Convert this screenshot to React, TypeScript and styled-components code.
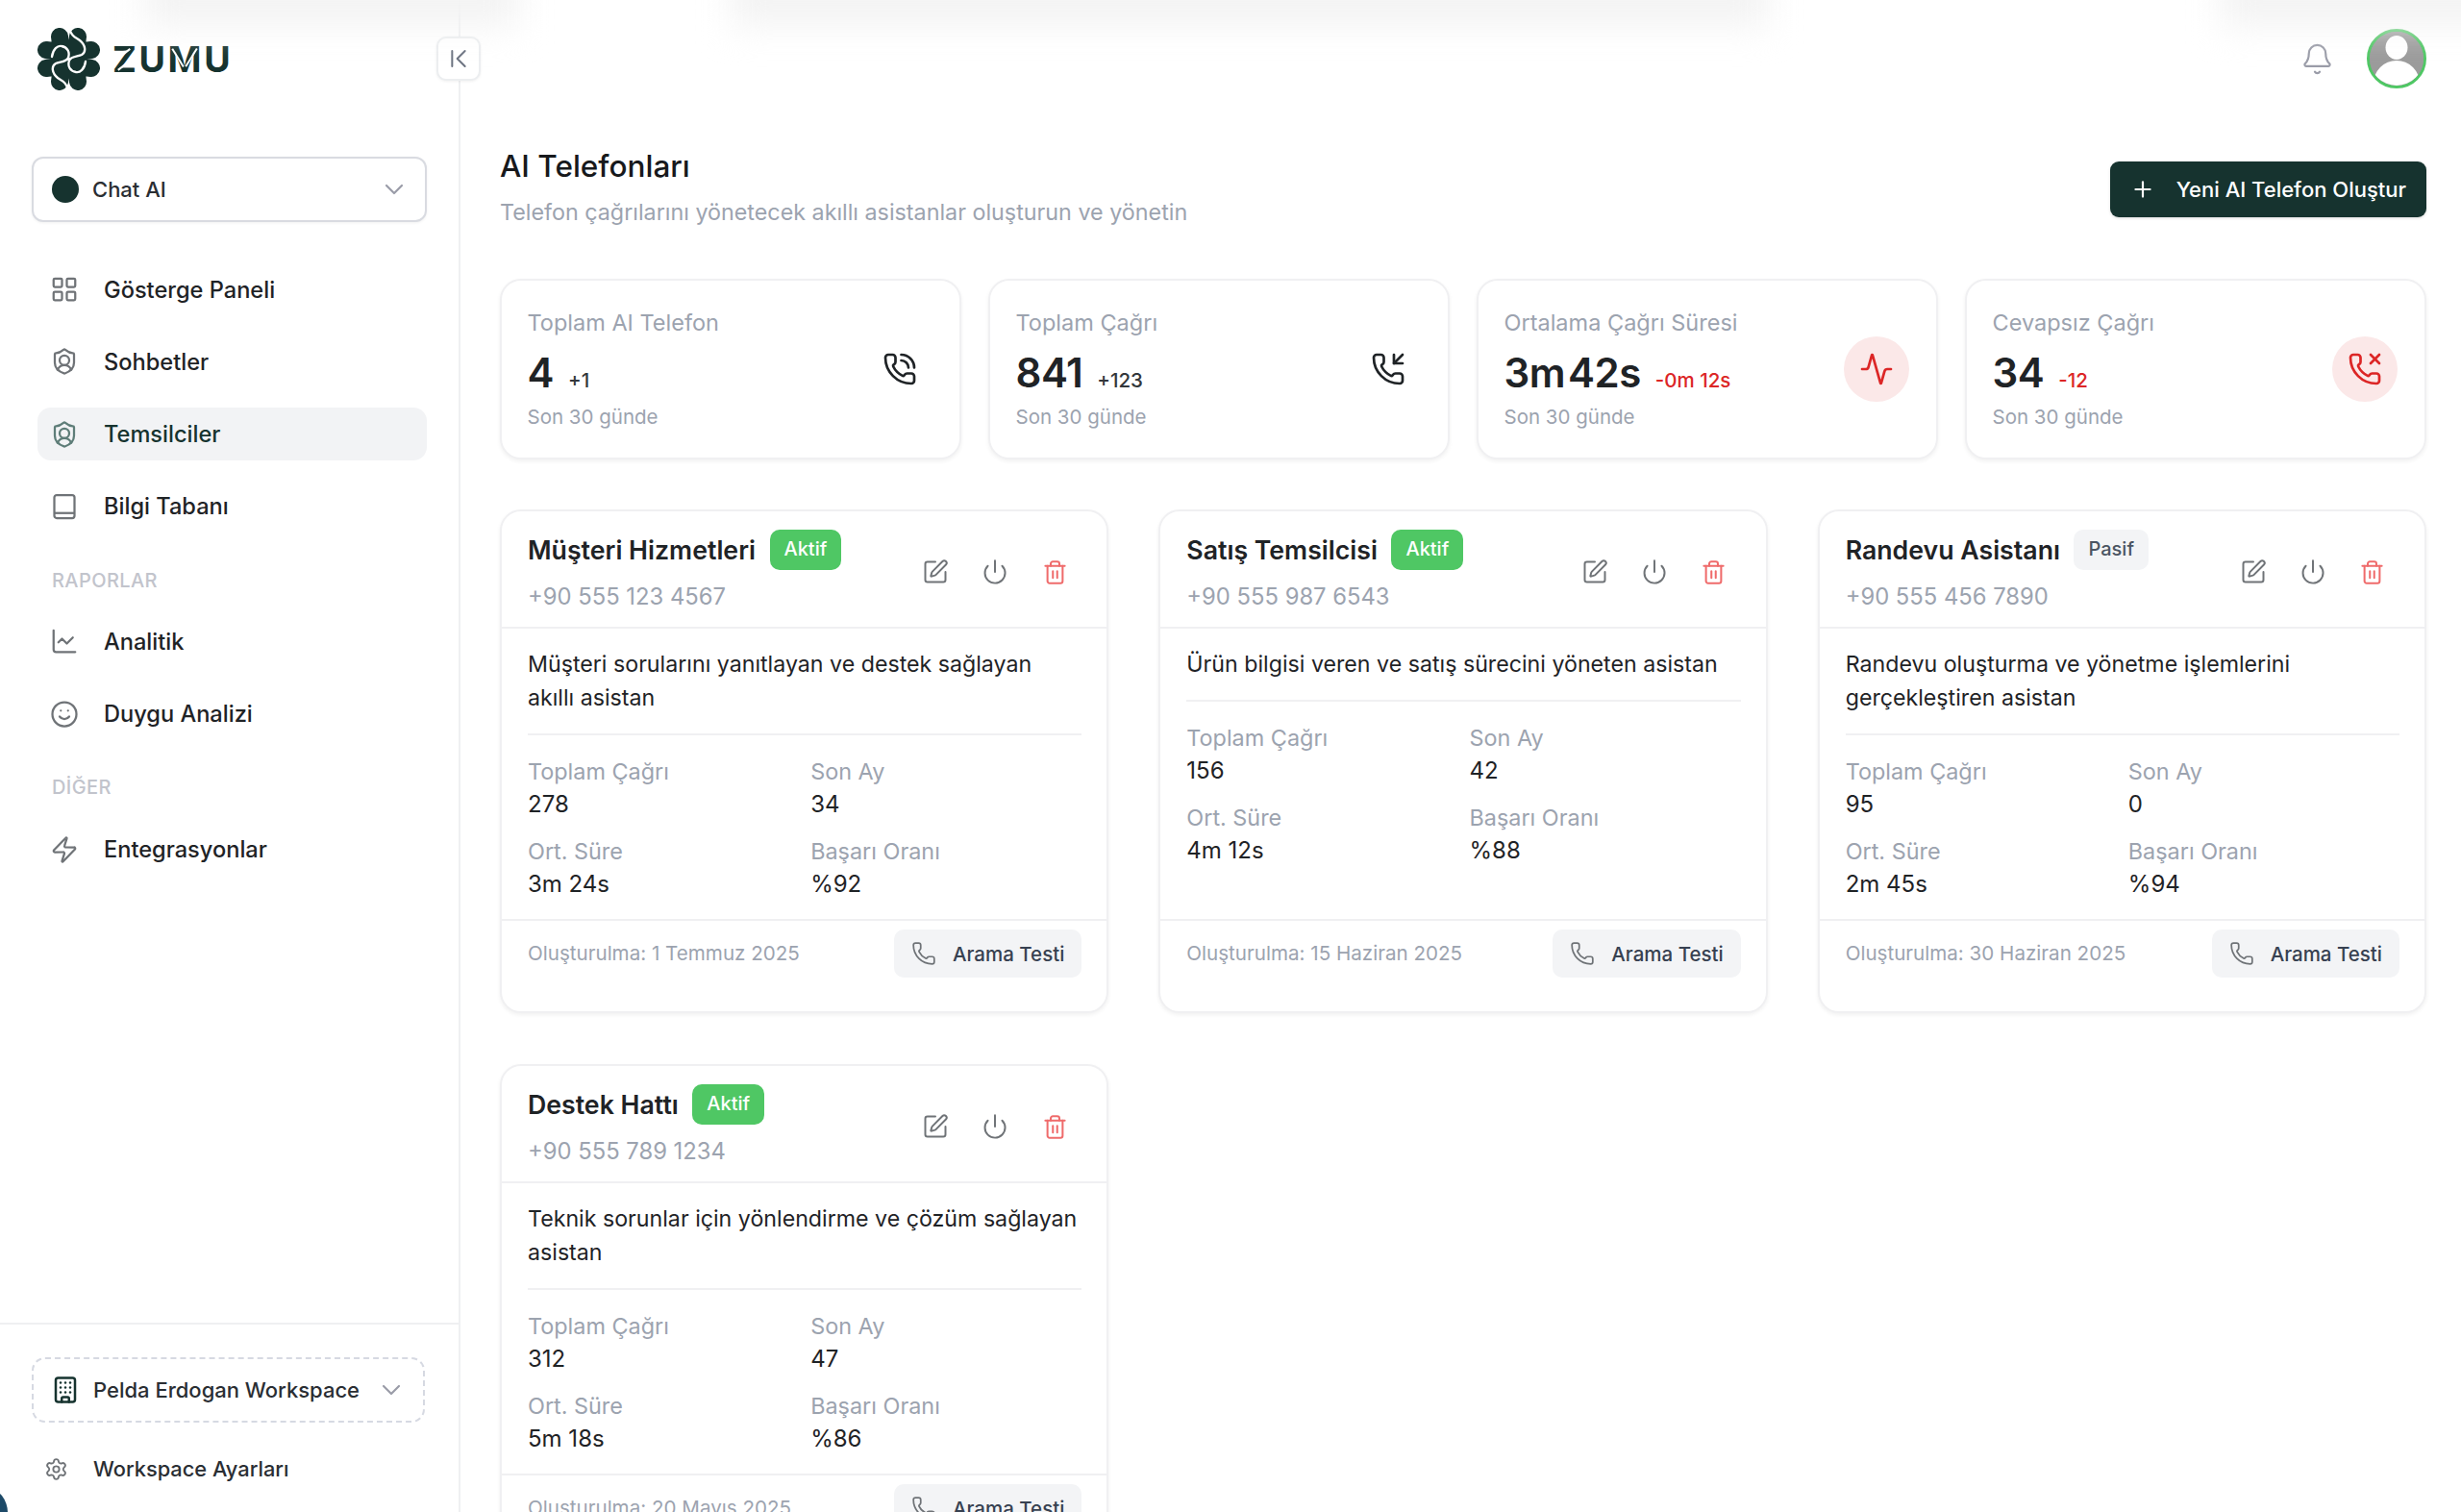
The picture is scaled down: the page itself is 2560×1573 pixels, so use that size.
import React from 'react';
import styled, { createGlobalStyle } from 'styled-components';
import {
  Activity,
  Bell,
  Building,
  ChartLine,
  ChevronDown,
  ChevronFirst,
  LayoutGrid,
  Phone,
  PhoneCall,
  PhoneIncoming,
  PhoneMissed,
  Plus,
  Power,
  Settings,
  ShieldUser,
  Smile,
  SquarePen,
  Trash2,
  Zap,
} from 'lucide-react';

const brand = '#16332f';
const muted = '#9ca3af';
const ink = '#1f2326';

const GlobalStyle = createGlobalStyle`
  * { box-sizing: border-box; }
  html, body { margin: 0; height: 100%; overflow: hidden; background: #fff; }
  body { font-family: Inter, 'Noto Sans', sans-serif; color: ${ink}; -webkit-font-smoothing: antialiased; }
`;

const Shell = styled.div`
  position: relative;
  display: flex;
  height: 100vh;
  overflow: hidden;
`;

const TopGlow = styled.div<{ $left: number; $width: number }>`
  position: absolute;
  top: -34px;
  left: ${p => p.$left}px;
  width: ${p => p.$width}px;
  height: 60px;
  background: #f3f3f3;
  filter: blur(18px);
  pointer-events: none;
`;

const CornerBlob = styled.div`
  position: absolute;
  left: -32px;
  bottom: -26px;
  width: 40px;
  height: 50px;
  border-radius: 50%;
  background: #1d4a68;
`;

const Sidebar = styled.aside`
  position: relative;
  flex: 0 0 479px;
  display: flex;
  flex-direction: column;
  height: 100%;
  border-right: 2px solid #eff0f2;
`;

const CollapseButton = styled.button`
  position: absolute;
  top: 38px;
  left: 454px;
  width: 46px;
  height: 46px;
  display: grid;
  place-items: center;
  padding: 0;
  background: #fff;
  border: 2px solid #eceef0;
  border-radius: 10px;
  box-shadow: 0 1px 3px rgba(0, 0, 0, 0.06);
  color: #6b7280;
`;

const LogoRow = styled.div`
  display: flex;
  align-items: center;
  gap: 13px;
  height: 65px;
  margin: 29px 0 0 39px;
`;

const Wordmark = styled.span`
  display: flex;
  font-size: 37.5px;
  font-weight: 700;
  letter-spacing: 2.6px;
  line-height: 1;
  color: ${brand};
`;

// stencil cuts of the logotype, two thin white bars over one letter
const LogoLetter = styled.span<{ $cut?: 'z' | 'm' }>`
  position: relative;

  &::before,
  &::after {
    content: '';
    display: ${p => (p.$cut ? 'block' : 'none')};
    position: absolute;
    width: 2.4px;
    background: #fff;
  }

  &::before {
    height: ${p => (p.$cut === 'z' ? 26 : 22)}px;
    top: ${p => (p.$cut === 'z' ? 3 : 6)}px;
    left: ${p => (p.$cut === 'z' ? 7 : 9)}px;
    transform: rotate(${p => (p.$cut === 'z' ? 52 : -32)}deg);
  }

  &::after {
    height: ${p => (p.$cut === 'z' ? 26 : 22)}px;
    top: ${p => (p.$cut === 'z' ? 9 : 6)}px;
    left: ${p => (p.$cut === 'z' ? 15 : 23)}px;
    transform: rotate(${p => (p.$cut === 'z' ? 52 : 32)}deg);
  }
`;

const ProductSelect = styled.div`
  display: flex;
  align-items: center;
  height: 68px;
  margin: 69px 33px 0 33px;
  padding: 0 16px 0 19px;
  background: #fff;
  border: 2px solid #d9dbe1;
  border-radius: 12px;
  box-shadow: 0 1px 3px rgba(0, 0, 0, 0.06);
  font-size: 22px;
  font-weight: 500;
  color: #2a2e33;
`;

const Dot = styled.span`
  width: 28px;
  height: 28px;
  margin-right: 14px;
  border-radius: 50%;
  background: ${brand};
`;

const Chevron = styled(ChevronDown)`
  margin-left: auto;
  color: #9a9ca8;
`;

const NavGroup = styled.nav`
  display: flex;
  flex-direction: column;
  gap: 20.3px;
  margin: 0 33px 0 39px;
`;

const FirstNav = styled(NavGroup)`
  margin-top: 42.5px;
`;

const NavItem = styled.div<{ $active?: boolean }>`
  display: flex;
  align-items: center;
  gap: 26.5px;
  height: 55px;
  padding-left: 12.5px;
  border-radius: 14px;
  font-size: 23.6px;
  font-weight: 500;
  background: ${p => (p.$active ? '#f2f3f5' : 'transparent')};
  color: ${p => (p.$active ? brand : ink)};

  svg {
    flex: none;
    color: ${p => (p.$active ? '#5e7d78' : '#6f7377')};
  }
`;

const SectionLabel = styled.div<{ $top: number; $bottom: number }>`
  margin: ${p => p.$top}px 0 ${p => p.$bottom}px 54px;
  font-size: 20px;
  line-height: 20px;
  font-weight: 500;
  letter-spacing: 0.4px;
  color: #c2c4cc;
`;

const SidebarFooter = styled.div`
  margin-top: auto;
  height: 197px;
  padding-top: 34px;
  border-top: 2px solid #eff0f2;
`;

const WorkspaceSelect = styled.div`
  display: flex;
  align-items: center;
  height: 68px;
  margin: 0 35px 0 33px;
  padding: 0 17px 0 18px;
  border: 2px dashed #d6d9e2;
  border-radius: 14px;
  font-size: 22px;
  font-weight: 500;
  color: #2a2e33;

  > svg:first-child {
    margin-right: 14px;
    color: ${brand};
  }
`;

const SettingsRow = styled.div`
  display: flex;
  align-items: center;
  gap: 26px;
  margin: 31px 0 0 46px;
  height: 34px;
  font-size: 21.8px;
  font-weight: 500;
  color: #2a2e33;

  svg {
    color: #6f7377;
  }
`;

const Main = styled.main`
  flex: 1;
  min-width: 0;
  padding: 0 36px 0 41px;
`;

const TopBar = styled.header`
  display: flex;
  align-items: center;
  justify-content: flex-end;
  gap: 34px;
  height: 122px;
`;

const BellIcon = styled(Bell)`
  color: #9a9ca8;
`;

const Avatar = styled.div`
  width: 62px;
  height: 62px;
  border-radius: 50%;
  border: 3px solid #4fc764;
  background: #9b9b9b;
  overflow: hidden;

  svg {
    display: block;
    width: 100%;
    height: 100%;
  }
`;

const PageHead = styled.section`
  display: flex;
  align-items: center;
  justify-content: space-between;
  height: 90px;
  margin-top: 30px;
`;

const Title = styled.h1`
  margin: 0;
  font-size: 31.5px;
  line-height: 42px;
  font-weight: 500;
  color: #17191c;
`;

const Subtitle = styled.p`
  margin: 10px 0 4px;
  font-size: 23.3px;
  line-height: 34px;
  color: ${muted};
`;

const PrimaryButton = styled.button`
  display: flex;
  align-items: center;
  gap: 22px;
  height: 58px;
  padding: 0 21px;
  border: 0;
  border-radius: 9px;
  background: ${brand};
  color: #fff;
  font: 500 22px Inter, sans-serif;
  box-shadow: 0 1px 3px rgba(0, 0, 0, 0.15);
`;

const StatGrid = styled.section`
  display: grid;
  grid-template-columns: repeat(4, 1fr);
  gap: 28px;
  margin-top: 48px;
`;

const StatCard = styled.article`
  display: flex;
  align-items: center;
  justify-content: space-between;
  height: 188px;
  padding: 0 28px 0 26.5px;
  border: 2px solid #f0f0f2;
  border-radius: 22px;
  background: #fff;
  box-shadow: 0 2px 4px rgba(0, 0, 0, 0.06);
`;

const StatLabel = styled.div`
  font-size: 23.5px;
  line-height: 34px;
  color: ${muted};
`;

const StatValue = styled.div`
  display: flex;
  align-items: baseline;
  gap: 15px;
  margin-top: 8px;
  font-size: 42px;
  line-height: 54px;
  font-weight: 600;
  letter-spacing: -0.5px;
  word-spacing: -7px;
  color: ${ink};
`;

const StatDelta = styled.span<{ $down?: boolean }>`
  font-size: 20.5px;
  font-weight: 500;
  letter-spacing: 0;
  word-spacing: 0;
  color: ${p => (p.$down ? '#dc2626' : '#33373b')};
`;

const StatNote = styled.div`
  margin-top: -4px;
  font-size: 20.5px;
  line-height: 30px;
  color: ${muted};
`;

const StatIcon = styled.div<{ $alert?: boolean }>`
  flex: none;
  display: grid;
  place-items: center;
  width: 68px;
  height: 68px;
  border-radius: 50%;
  background: ${p => (p.$alert ? '#fbe8e8' : 'transparent')};
  color: ${p => (p.$alert ? '#dc2626' : ink)};
`;

const AgentGrid = styled.section`
  display: grid;
  grid-template-columns: repeat(3, 1fr);
  column-gap: 52px;
  row-gap: 53px;
  margin-top: 52px;
`;

const AgentCard = styled.article`
  display: flex;
  flex-direction: column;
  height: 524px;
  border: 2px solid #f0f0f2;
  border-radius: 22px;
  background: #fff;
  box-shadow: 0 2px 4px rgba(0, 0, 0, 0.06);
`;

const AgentHead = styled.div`
  display: flex;
  align-items: center;
  justify-content: space-between;
  height: 122px;
  padding: 0 34px 0 27px;
  border-bottom: 2px solid #f0f0f2;
`;

const AgentInfo = styled.div`
  padding-top: 4px;
`;

const NameRow = styled.div`
  display: flex;
  align-items: center;
  gap: 14.5px;
  height: 42px;
`;

const AgentName = styled.h2`
  margin: 0;
  font-size: 26.7px;
  font-weight: 600;
  color: ${ink};
`;

const Badge = styled.span<{ $off?: boolean }>`
  padding: 0 15px;
  height: 42px;
  line-height: 40px;
  border-radius: 10px;
  font-size: 20px;
  font-weight: 500;
  background: ${p => (p.$off ? '#f3f4f6' : '#4fc764')};
  color: ${p => (p.$off ? '#4b5563' : '#fff')};
`;

const PhoneNumber = styled.div`
  margin-top: 11px;
  font-size: 23.8px;
  line-height: 34px;
  color: ${muted};
`;

const Actions = styled.div`
  display: flex;
  gap: 22px;
  margin-top: 6px;
`;

const ActionButton = styled.button<{ $danger?: boolean }>`
  display: grid;
  place-items: center;
  width: 40px;
  height: 40px;
  padding: 0;
  border: 0;
  background: none;
  color: ${p => (p.$danger ? '#ef6b6b' : '#6f7377')};
`;

const AgentBody = styled.div`
  flex: 1;
  padding: 20px 26px 0 27px;
`;

const Description = styled.p`
  margin: 0;
  padding-bottom: 19px;
  border-bottom: 2px solid #f0f0f2;
  font-size: 23.2px;
  line-height: 35px;
  color: ${ink};
`;

const Metrics = styled.dl`
  display: grid;
  grid-template-columns: 1fr 1fr;
  column-gap: 12px;
  row-gap: 15px;
  margin: 21px 0 0;
`;

const MetricLabel = styled.dt`
  font-size: 23.4px;
  line-height: 34px;
  color: ${muted};
`;

const MetricValue = styled.dd`
  margin: 0;
  font-size: 24px;
  line-height: 34px;
  color: ${ink};
`;

const AgentFoot = styled.div`
  display: flex;
  align-items: flex-start;
  justify-content: space-between;
  height: 96px;
  padding: 9px 26px 0 27px;
  border-top: 2px solid #f0f0f2;
`;

const CreatedAt = styled.span`
  margin-top: 10px;
  font-size: 20.6px;
  line-height: 30px;
  color: ${muted};
`;

const TestButton = styled.button`
  display: flex;
  align-items: center;
  gap: 17px;
  height: 50px;
  padding: 0 18px;
  border: 0;
  border-radius: 10px;
  background: #f3f4f6;
  color: #374151;
  font: 500 20.5px Inter, sans-serif;

  svg {
    color: #6f7377;
  }
`;

const swirl = 'M20 35 C21 27 26 23 30 24 C36 25 39 30 37 36 C35 41 28 40 24 42 C19 45 20 52 26 57 C30 60 35 61 37 70';

const LogoMark: React.FC = () => (
  <svg width="65" height="65" viewBox="5 5 65 65">
    <g stroke={brand} strokeLinecap="round" fill="none" strokeWidth="18">
      <path d="M28 14 L30 30 M47 14 L45 30 M14 28 L30 30 M14 47 L30 45 M61 28 L45 30 M61 47 L45 45 M28 61 L30 45 M47 61 L45 45" />
    </g>
    <g stroke="#fff" strokeWidth="2.3" strokeLinecap="round" fill="none">
      <path d={swirl} />
      <path transform="rotate(180 37.5 37.5)" d={swirl} />
    </g>
  </svg>
);

const BookIcon: React.FC = () => (
  <svg width="30" height="30" viewBox="0 0 24 24" fill="none" stroke="currentColor" strokeWidth="1.8" strokeLinejoin="round">
    <rect x="3.6" y="2.4" width="16.8" height="19.2" rx="2" />
    <path d="M3.6 17.4h16.8" />
  </svg>
);

const UserPhoto: React.FC = () => (
  <svg viewBox="0 0 56 56">
    <rect width="56" height="56" fill="#9b9b9b" />
    <ellipse cx="28" cy="16.5" rx="11.5" ry="12.5" fill="#fff" />
    <ellipse cx="28" cy="54" rx="24" ry="24" fill="#fff" />
  </svg>
);

type Stat = {
  label: string;
  value: string;
  delta: string;
  down?: boolean;
  icon: React.ReactNode;
};

const stats: Stat[] = [
  { label: 'Toplam AI Telefon', value: '4', delta: '+1', icon: <PhoneCall size={36} strokeWidth={1.8} /> },
  { label: 'Toplam Çağrı', value: '841', delta: '+123', icon: <PhoneIncoming size={36} strokeWidth={1.8} /> },
  { label: 'Ortalama Çağrı Süresi', value: '3m 42s', delta: '-0m 12s', down: true, icon: <Activity size={36} strokeWidth={1.8} /> },
  { label: 'Cevapsız Çağrı', value: '34', delta: '-12', down: true, icon: <PhoneMissed size={36} strokeWidth={1.8} /> },
];

type Agent = {
  name: string;
  active: boolean;
  phone: string;
  description: string;
  total: string;
  lastMonth: string;
  avg: string;
  rate: string;
  created: string;
};

const agents: Agent[] = [
  {
    name: 'Müşteri Hizmetleri',
    active: true,
    phone: '+90 555 123 4567',
    description: 'Müşteri sorularını yanıtlayan ve destek sağlayan akıllı asistan',
    total: '278',
    lastMonth: '34',
    avg: '3m 24s',
    rate: '%92',
    created: '1 Temmuz 2025',
  },
  {
    name: 'Satış Temsilcisi',
    active: true,
    phone: '+90 555 987 6543',
    description: 'Ürün bilgisi veren ve satış sürecini yöneten asistan',
    total: '156',
    lastMonth: '42',
    avg: '4m 12s',
    rate: '%88',
    created: '15 Haziran 2025',
  },
  {
    name: 'Randevu Asistanı',
    active: false,
    phone: '+90 555 456 7890',
    description: 'Randevu oluşturma ve yönetme işlemlerini gerçekleştiren asistan',
    total: '95',
    lastMonth: '0',
    avg: '2m 45s',
    rate: '%94',
    created: '30 Haziran 2025',
  },
  {
    name: 'Destek Hattı',
    active: true,
    phone: '+90 555 789 1234',
    description: 'Teknik sorunlar için yönlendirme ve çözüm sağlayan asistan',
    total: '312',
    lastMonth: '47',
    avg: '5m 18s',
    rate: '%86',
    created: '20 Mayıs 2025',
  },
];

export default function App() {
  return (
    <>
      <GlobalStyle />
      <Shell>
        <Sidebar>
          <LogoRow>
            <LogoMark />
            <Wordmark>
              <LogoLetter $cut="z">Z</LogoLetter>
              <LogoLetter>U</LogoLetter>
              <LogoLetter $cut="m">M</LogoLetter>
              <LogoLetter>U</LogoLetter>
            </Wordmark>
          </LogoRow>
          <ProductSelect>
            <Dot />
            Chat AI
            <Chevron size={32} strokeWidth={1.6} />
          </ProductSelect>
          <FirstNav>
            <NavItem><LayoutGrid size={30} strokeWidth={1.8} />Gösterge Paneli</NavItem>
            <NavItem><ShieldUser size={30} strokeWidth={1.8} />Sohbetler</NavItem>
            <NavItem $active><ShieldUser size={30} strokeWidth={1.8} />Temsilciler</NavItem>
            <NavItem><BookIcon />Bilgi Tabanı</NavItem>
          </FirstNav>
          <SectionLabel $top={39.5} $bottom={26}>RAPORLAR</SectionLabel>
          <NavGroup>
            <NavItem><ChartLine size={30} strokeWidth={1.8} />Analitik</NavItem>
            <NavItem><Smile size={30} strokeWidth={1.8} />Duygu Analizi</NavItem>
          </NavGroup>
          <SectionLabel $top={39} $bottom={27}>DİĞER</SectionLabel>
          <NavGroup>
            <NavItem><Zap size={30} strokeWidth={1.8} />Entegrasyonlar</NavItem>
          </NavGroup>
          <SidebarFooter>
            <WorkspaceSelect>
              <Building size={30} strokeWidth={2} />
              Pelda Erdogan Workspace
              <Chevron size={32} strokeWidth={1.6} />
            </WorkspaceSelect>
            <SettingsRow>
              <Settings size={25} strokeWidth={1.8} />
              Workspace Ayarları
            </SettingsRow>
          </SidebarFooter>
          <CollapseButton aria-label="Daralt"><ChevronFirst size={32} strokeWidth={1.5} /></CollapseButton>
        </Sidebar>

        <Main>
          <TopBar>
            <BellIcon size={35} strokeWidth={1.5} />
            <Avatar><UserPhoto /></Avatar>
          </TopBar>

          <PageHead>
            <div>
              <Title>AI Telefonları</Title>
              <Subtitle>Telefon çağrılarını yönetecek akıllı asistanlar oluşturun ve yönetin</Subtitle>
            </div>
            <PrimaryButton><Plus size={26} />Yeni AI Telefon Oluştur</PrimaryButton>
          </PageHead>

          <StatGrid>
            {stats.map(stat => (
              <StatCard key={stat.label}>
                <div>
                  <StatLabel>{stat.label}</StatLabel>
                  <StatValue>
                    {stat.value}
                    <StatDelta $down={stat.down}>{stat.delta}</StatDelta>
                  </StatValue>
                  <StatNote>Son 30 günde</StatNote>
                </div>
                <StatIcon $alert={stat.down}>{stat.icon}</StatIcon>
              </StatCard>
            ))}
          </StatGrid>

          <AgentGrid>
            {agents.map(agent => (
              <AgentCard key={agent.name}>
                <AgentHead>
                  <AgentInfo>
                    <NameRow>
                      <AgentName>{agent.name}</AgentName>
                      <Badge $off={!agent.active}>{agent.active ? 'Aktif' : 'Pasif'}</Badge>
                    </NameRow>
                    <PhoneNumber>{agent.phone}</PhoneNumber>
                  </AgentInfo>
                  <Actions>
                    <ActionButton aria-label="Düzenle"><SquarePen size={28} strokeWidth={1.7} /></ActionButton>
                    <ActionButton aria-label="Kapat"><Power size={28} strokeWidth={1.7} /></ActionButton>
                    <ActionButton $danger aria-label="Sil"><Trash2 size={27} strokeWidth={1.8} /></ActionButton>
                  </Actions>
                </AgentHead>
                <AgentBody>
                  <Description>{agent.description}</Description>
                  <Metrics>
                    <div>
                      <MetricLabel>Toplam Çağrı</MetricLabel>
                      <MetricValue>{agent.total}</MetricValue>
                    </div>
                    <div>
                      <MetricLabel>Son Ay</MetricLabel>
                      <MetricValue>{agent.lastMonth}</MetricValue>
                    </div>
                    <div>
                      <MetricLabel>Ort. Süre</MetricLabel>
                      <MetricValue>{agent.avg}</MetricValue>
                    </div>
                    <div>
                      <MetricLabel>Başarı Oranı</MetricLabel>
                      <MetricValue>{agent.rate}</MetricValue>
                    </div>
                  </Metrics>
                </AgentBody>
                <AgentFoot>
                  <CreatedAt>Oluşturulma: {agent.created}</CreatedAt>
                  <TestButton><Phone size={26} strokeWidth={1.6} />Arama Testi</TestButton>
                </AgentFoot>
              </AgentCard>
            ))}
          </AgentGrid>
        </Main>

        <TopGlow $left={150} $width={390} />
        <TopGlow $left={760} $width={1080} />
        <TopGlow $left={2310} $width={300} />
        <CornerBlob />
      </Shell>
    </>
  );
}
